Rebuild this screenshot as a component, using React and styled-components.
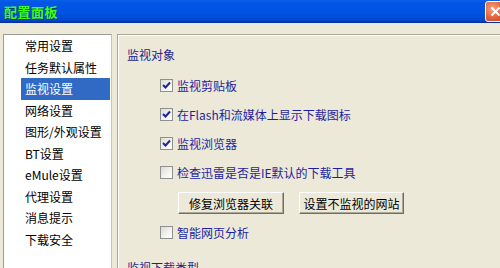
import React from "react";
import styled, { createGlobalStyle } from "styled-components";

const GlobalStyle = createGlobalStyle`
  html, body { margin: 0; padding: 0; background: #ece9d8; }
  body { font-family: "Noto Sans CJK SC", "Liberation Sans", sans-serif; font-size: 12px; }
`;

const Window = styled.div`
  width: 500px;
  height: 268px;
  overflow: hidden;
  display: flex;
  flex-direction: column;
  background: #ece9d8;
`;

const TitleBar = styled.div`
  height: 23px;
  flex: none;
  display: flex;
  align-items: center;
  justify-content: space-between;
  padding-left: 4px;
  background: linear-gradient(#0a5fe8 0%, #0256e6 10%, #0052e0 60%, #0049d4 90%, #003cb0 100%);
  border-bottom: 1px solid #0a2f9e;
  box-sizing: border-box;
  overflow: hidden;
`;

const Title = styled.span`
  color: #3cff14;
  font-weight: bold;
  font-size: 13px;
  letter-spacing: 0.5px;
  text-shadow: 1px 1px 0 #0a3a7a;
`;

const CloseButton = styled.div`
  width: 21px;
  height: 21px;
  flex: none;
  margin-right: -6px;
  box-sizing: border-box;
  border: 1px solid #fff;
  border-radius: 3px;
  background: radial-gradient(circle at 35% 35%, #f4a585 0%, #e0603a 55%, #c4401e 100%);
  display: flex;
  align-items: center;
  justify-content: center;
`;

const Body = styled.div`
  flex: 1;
  min-height: 0;
  display: flex;
  gap: 5px;
  padding: 11px 0 0 3px;
`;

const NavList = styled.div`
  width: 109px;
  flex: none;
  box-sizing: border-box;
  background: #fff;
  border: 1px solid #9c9c94;
  border-right-color: #c8c6bc;
  border-bottom: none;
  display: flex;
  flex-direction: column;
`;

const NavItem = styled.div`
  height: 21.5px;
  display: flex;
  align-items: center;
  margin: 0 1px 0 17px;
  padding-left: 4px;
  color: ${(p) => (p.$active ? "#fff" : "#000")};
  background: ${(p) => (p.$active ? "#316ac5" : "transparent")};
  white-space: nowrap;
`;

const Content = styled.div`
  flex: 1;
  border-top: 1px solid #aca899;
  border-left: 1px solid #aca899;
  box-shadow: inset 1px 1px 0 #fff;
  padding: 13px 0 0 9px;
  display: flex;
  flex-direction: column;
  overflow: hidden;
`;

const Heading = styled.div`
  height: 14px;
  line-height: 14px;
  flex: none;
  color: #1e1e8c;
  margin-top: ${(p) => p.$top || 0}px;
`;

const CheckRow = styled.label`
  height: 29px;
  flex: none;
  display: flex;
  align-items: center;
  gap: 4px;
  margin-left: 33px;
  margin-top: ${(p) => p.$top || 0}px;
  color: #1e1ea0;
  white-space: nowrap;
`;

const Box = styled.span`
  width: 13px;
  height: 13px;
  box-sizing: border-box;
  flex: none;
  border: 1px solid #8e8f8f;
  background: linear-gradient(135deg, #dcdcd4 0%, #f4f4f0 60%, #ffffff 100%);
  display: flex;
  align-items: center;
  justify-content: center;
`;

const ButtonRow = styled.div`
  display: flex;
  flex: none;
  gap: 15px;
  margin: 5px 0 0 51px;
`;

const Button = styled.div`
  height: 22px;
  width: ${(p) => p.$w}px;
  box-sizing: border-box;
  display: flex;
  align-items: center;
  justify-content: center;
  color: #000;
  background: #ece9d8;
  border-top: 1px solid #fff;
  border-left: 1px solid #fff;
  border-right: 1px solid #716f64;
  border-bottom: 1px solid #716f64;
  box-shadow: inset -1px -1px 0 #aca899;
  white-space: nowrap;
`;

const Check = ({ checked }) => (
  <Box>
    {checked && (
      <svg width="9" height="9" viewBox="0 0 9 9">
        <path d="M1 4 L3.5 6.5 L8 1.5" fill="none" stroke="#21219c" strokeWidth="2" />
      </svg>
    )}
  </Box>
);

const navItems = [
  "常用设置",
  "任务默认属性",
  "监视设置",
  "网络设置",
  "图形/外观设置",
  "BT设置",
  "eMule设置",
  "代理设置",
  "消息提示",
  "下载安全",
];

export default function App() {
  return (
    <>
      <GlobalStyle />
      <Window>
        <TitleBar>
          <Title>配置面板</Title>
          <CloseButton>
            <svg width="11" height="11" viewBox="0 0 11 11">
              <path d="M1.5 1.5 L9.5 9.5 M9.5 1.5 L1.5 9.5" stroke="#fff" strokeWidth="2" />
            </svg>
          </CloseButton>
        </TitleBar>
        <Body>
          <NavList>
            {navItems.map((t, i) => (
              <NavItem key={t} $active={i === 2}>
                {t}
              </NavItem>
            ))}
          </NavList>
          <Content>
            <Heading>监视对象</Heading>
            <CheckRow $top={9}>
              <Check checked />
              监视剪贴板
            </CheckRow>
            <CheckRow>
              <Check checked />
              在Flash和流媒体上显示下载图标
            </CheckRow>
            <CheckRow>
              <Check checked />
              监视浏览器
            </CheckRow>
            <CheckRow>
              <Check />
              检查迅雷是否是IE默认的下载工具
            </CheckRow>
            <ButtonRow>
              <Button $w={106}>修复浏览器关联</Button>
              <Button $w={105}>设置不监视的网站</Button>
            </ButtonRow>
            <CheckRow $top={4}>
              <Check />
              智能网页分析
            </CheckRow>
            <Heading $top={14}>监视下载类型</Heading>
          </Content>
        </Body>
      </Window>
    </>
  );
}
